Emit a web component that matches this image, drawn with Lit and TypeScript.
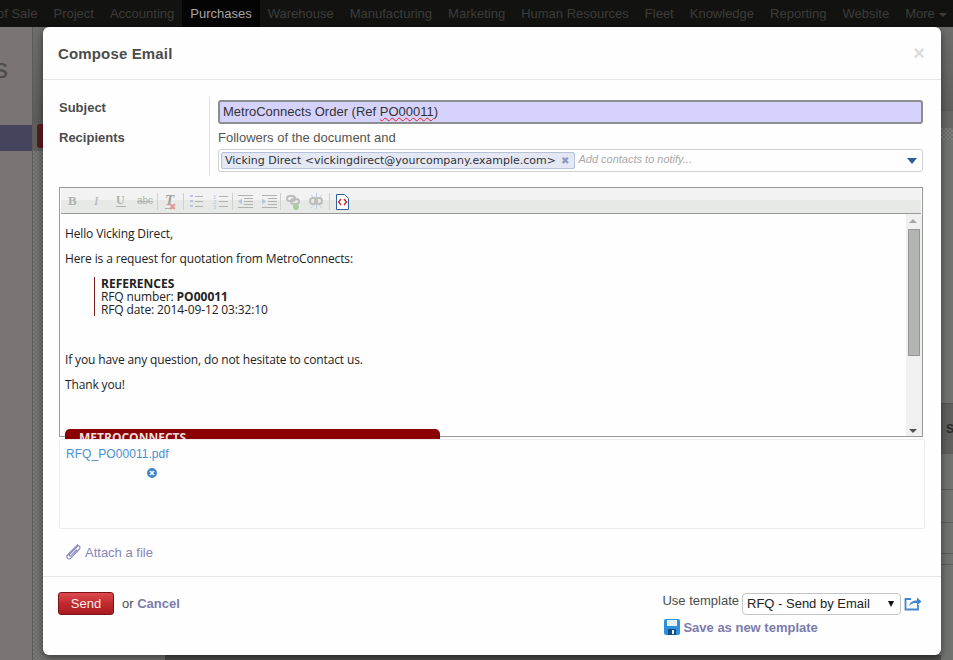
import { LitElement, html, css } from "lit";
import { customElement } from "lit/decorators.js";

const MENU = ["of Sale","Project","Accounting","Purchases","Warehouse","Manufacturing","Marketing","Human Resources","Fleet","Knowledge","Reporting","Website"];

@customElement("app-root")
export class AppRoot extends LitElement {
  static styles = css`
    :host { display:block; position:relative; width:953px; height:660px; overflow:hidden; background:#6f6c6c; font-family:"Liberation Sans",Arial,sans-serif; font-size:13px; color:#4c4c4c; }
    .nav { display:flex; height:27px; background:#121311; color:#3d3c3a; margin-left:-11px; line-height:27px; white-space:nowrap; }
    .nav span { padding:0 8px; }
    .nav .on { background:#040404; color:#a9a6a2; }
    .nav .caret { display:inline-block; border:4px solid transparent; border-top-color:#3d3c3a; border-bottom:0; margin-left:4px; vertical-align:middle; }
    .back { display:flex; height:633px; }
    .side { width:32px; flex:none; background:#7a7574; border-right:1px solid #5b5a59; position:relative; overflow:hidden; }
    .side .s { font-size:28px; color:#4c4a4a; position:absolute; left:-6px; top:27px; line-height:30px; }
    .side .cur { position:absolute; left:0; right:0; top:98px; height:26px; background:#45435e; }
    .lstrip { width:10px; flex:none; display:flex; flex-direction:column; }
    .lstrip .a { height:95px; background:linear-gradient(#6e6f6c,#5c5d5a); }
    .lstrip .b { height:29px; background:#5f5f5d; padding:2px 0 0 4px; box-sizing:border-box; }
    .lstrip .b i { display:block; width:8px; height:24px; background:#5e1a1c; border-radius:3px; }
    .check { background:repeating-conic-gradient(#6c6c6a 0 25%,#7d7d7b 0 50%) 0 0/4px 4px; }
    .lstrip .c { flex:1; }
    .mid { flex:1; display:flex; flex-direction:column; justify-content:flex-end; background:#6d6d6b; }
    .mid .bot { height:5px; display:flex; }
    .mid .bot i { width:122px; background:#777775; }
    .mid .bot b { flex:1; background:#4f4f4d; }
    .rstrip { width:12px; flex:none; display:flex; flex-direction:column; background:#717370; overflow:hidden; }
    .rstrip .a { height:83px; flex:none; background:linear-gradient(#6e6f6c,#5f605d); }
    .rstrip .b { height:18px; flex:none; background:#666765; border-top:1px solid #5a5a58; box-sizing:border-box; }
    .rstrip .c { height:12px; flex:none; }
    .rstrip .d { height:263px; flex:none; }
    .rstrip .e { height:51px; flex:none; background:#5f605d; border-top:1px solid #555; box-sizing:border-box; display:flex; align-items:center; font-size:12px; font-weight:bold; color:#2c2b2a; padding-left:5px; }
    .rstrip .row { flex:none; border-bottom:1px solid #5d5e5c; box-sizing:border-box; }
    .modal { position:absolute; left:43px; top:27px; width:898px; height:628px; background:#fefefe; border-radius:6px; box-shadow:0 3px 9px rgba(0,0,0,.5); display:flex; flex-direction:column; }
    .head { height:53px; box-sizing:border-box; border-bottom:1px solid #e5e5e5; display:flex; align-items:center; justify-content:space-between; padding:0 16px 0 15px; }
    .head h3 { margin:0; font-size:15px; font-weight:bold; color:#4c4c4c; letter-spacing:.15px; }
    .close { font-size:20px; font-weight:bold; color:#dcdcdc; line-height:20px; }
    .body { flex:1; padding:17px 18px 0 16px; display:flex; flex-direction:column; }
    .form { display:flex; height:79px; flex:none; }
    .labels { width:150px; border-right:1px solid #dedede; font-weight:bold; color:#4c4c4c; }
    .labels div { height:30px; line-height:22px; }
    .fields { flex:1; padding:3px 0 0 8px; display:flex; flex-direction:column; }
    .subject { height:24px; box-sizing:border-box; background:#d5d2fd; border:2px solid #8d8d8f; border-radius:3px; padding:0 3px; line-height:20px; color:#333; font-size:13px; }
    .squig { text-decoration:underline wavy #e02020 1px; text-underline-offset:1px; }
    .follow { margin-top:6px; height:19px; line-height:16px; color:#555; }
    .tags { height:23px; box-sizing:border-box; border:1px solid #d0d0d0; border-radius:3px; display:flex; align-items:center; padding-left:2px; position:relative; }
    .tag { height:17px; box-sizing:border-box; background:#e4e8f5; border:1px solid #b6c2d8; border-radius:2px; font-family:"DejaVu Sans",sans-serif; font-size:11px; line-height:15px; padding:0 5px 0 3px; color:#333; white-space:nowrap; display:flex; gap:5px; }
    .tag b { color:#8c9abb; font-size:10px; }
    .ph { font-size:11px; font-style:italic; color:#a8a8a8; margin:-3px 0 0 3px; }
    .drop { position:absolute; right:5px; top:8px; border:5px solid transparent; border-top:6px solid #2a5f9e; border-bottom:0; }
    .editor { margin-top:11px; width:864px; height:250px; flex:none; box-sizing:border-box; border:1px solid #999; display:flex; flex-direction:column; }
    .tools { height:25px; flex:none; background:linear-gradient(#f1f2f1 0 46%,#e7e9e7 46%); border-bottom:1px solid #999; margin:0 1px; }
    .tools svg { display:block; }
    .content { flex:1; display:flex; min-height:0; }
    .text { flex:1; padding:13px 5px 0; font-family:"Open Sans","Noto Sans",sans-serif; font-size:12px; line-height:13px; color:#222; letter-spacing:-.135px; min-width:0; }
    .text p { margin:0 0 12px; line-height:13px; }
    .quote { margin:0 0 0 29px; padding-left:6px; border-left:1px solid #7b1c1c; height:39px; line-height:13px; letter-spacing:-.13px; }
    .quote b { letter-spacing:0; }
    .text .brand { margin-top:38px; width:375px; height:18px; background:#8b0000; border-radius:5px 5px 0 0; color:#f0dede; font-weight:bold; padding-left:14px; box-sizing:border-box; line-height:17px; letter-spacing:0; }
    .scroll { width:16px; background:#eff0ef; position:relative; flex:none; }
    .thumb { position:absolute; left:2px; top:15px; width:10px; height:125px; background:#b3b5b3; border:1px solid #959795; }
    .up,.dn { position:absolute; left:3px; border:4px solid transparent; }
    .up { top:5px; border-top:0; border-bottom:4px solid #a5a5a5; }
    .dn { bottom:3px; border-bottom:0; border-top:4px solid #505050; }
    .att { width:866px; height:90px; flex:none; box-sizing:border-box; margin-top:2px; position:relative; background:#fefefe; border:1px solid #ececf0; border-radius:2px; padding:7px 6px; color:#4a8fd0; font-size:12px; line-height:14px; letter-spacing:.06px; }
    .x { margin:7px 0 0 81px; display:block; }
    .attach { display:flex; align-items:center; gap:4px; margin:12px 0 0 6px; color:#8585ba; height:22px; }
    .foot { height:79px; box-sizing:border-box; border-top:1px solid #e5e5e5; padding:15px 19px 0 15px; display:flex; justify-content:space-between; margin-top:auto; }
    .left { display:flex; align-items:flex-start; gap:8px; }
    .send { width:56px; height:23px; box-sizing:border-box; border:1px solid #7d1318; border-radius:3px; background:linear-gradient(#dc4a4f,#c02a2e 50%,#a81c20); color:#fbeaea; text-align:center; line-height:21px; font-size:13px; }
    .or { line-height:23px; }
    .lnk { color:#7c7bad; font-weight:bold; }
    .right { display:flex; flex-direction:column; }
    .r1 { display:flex; align-items:flex-start; gap:3px; }
    .r1 span { line-height:18px; }
    .pick { width:159px; height:22px; box-sizing:border-box; border:1px solid #c4c4c4; border-radius:4px; padding:0 4px; font-size:13px; color:#222; line-height:20px; display:flex; justify-content:space-between; align-items:center; margin-top:1px; }
    .pick i { border:3.5px solid transparent; border-top:6px solid #111; border-bottom:0; margin-right:2px; }
    .share { margin:3px 0 0 0; }
    .r2 { display:flex; gap:3px; align-items:center; margin:4px 0 0 2px; }
  `;

  render() {
    const g = "#b0b2b0";
    const b = "#b9c4e4";
    return html`
      <div class="nav">
        ${MENU.map(m => html`<span class=${m === "Purchases" ? "on" : ""}>${m}</span>`)}
        <span>More<i class="caret"></i></span>
      </div>
      <div class="back">
        <div class="side"><div class="s">s</div><div class="cur"></div></div>
        <div class="lstrip"><div class="a"></div><div class="b"><i></i></div><div class="c check"></div></div>
        <div class="mid"><div class="bot"><i></i><b></b></div></div>
        <div class="rstrip">
          <div class="a"></div><div class="b"></div><div class="c check"></div><div class="d"></div>
          <div class="e">S</div>
          <div class="row" style="height:36px"></div><div class="row" style="height:33px"></div>
          <div class="row" style="height:31px"></div><div class="row" style="height:11px"></div>
        </div>
      </div>
      <div class="modal">
        <div class="head"><h3>Compose Email</h3><span class="close">×</span></div>
        <div class="body">
          <div class="form">
            <div class="labels"><div>Subject</div><div>Recipients</div></div>
            <div class="fields">
              <div class="subject">MetroConnects Order (Ref <span class="squig">PO00011</span>)</div>
              <div class="follow">Followers of the document and</div>
              <div class="tags">
                <div class="tag">Vicking Direct &lt;vickingdirect@yourcompany.example.com&gt;<b>✖</b></div>
                <span class="ph">Add contacts to notify...</span>
                <i class="drop"></i>
              </div>
            </div>
          </div>
          <div class="editor">
            <div class="tools">
              <svg width="300" height="25" viewBox="61 188 300 25">
                <g font-family="Liberation Serif" fill="${g}" font-size="13">
                  <text x="68" y="205" font-weight="bold">B</text>
                  <text x="94" y="205" font-style="italic">I</text>
                  <text x="116" y="204" font-size="12" font-weight="bold">U</text>
                  <text x="137" y="204" font-size="10" font-family="Liberation Sans">abc</text>
                  <text x="165" y="205" font-style="italic" font-weight="bold" font-size="15" fill="#a0a2a0">T</text>
                </g>
                <path d="M116 206.500h10M137 201.500h16M165 208.500h9" stroke="${g}"/>
                <path d="M170 204l5 5M175 204l-5 5" stroke="#e59a9a" stroke-width="2"/>
                <path d="M157.500 193v17M183.500 193v17M232.500 193v17M280.500 193v17M329.500 193v17" stroke="#cfd0cf"/>
                <path d="M190 196h3M190 201h3M190 206h3" stroke="${b}" stroke-width="2"/>
                <path d="M195 196.500h8M195 201.500h8M195 206.500h8M219 196.500h9M219 201.500h9M219 206.500h9" stroke="${g}"/>
                <g font-family="Liberation Sans" font-size="6" fill="${b}"><text x="213" y="199">1</text><text x="213" y="204">2</text><text x="213" y="209">3</text></g>
                <path d="M238 195.500h15M244 198.500h9M244 201.500h9M244 204.500h9M238 207.500h15M262 195.500h15M268 198.500h9M268 201.500h9M268 204.500h9M262 207.500h15" stroke="${g}"/>
                <path d="M238 201.500l4-3v6zM266 201.500l-4-3v6z" fill="${b}"/>
                <g fill="none" stroke="#bcbebc" stroke-width="2">
                  <rect x="287" y="196" width="8" height="5" rx="2.500"/><rect x="291" y="199" width="8" height="5" rx="2.500"/>
                  <rect x="310" y="198" width="7" height="6" rx="3"/><rect x="315" y="198" width="7" height="6" rx="3"/>
                </g>
                <circle cx="296" cy="207" r="3" fill="#a5cf9a"/>
                <path d="M316.500 193v4M316.500 205v4M311 195l2.500 2.500M322 195l-2.500 2.500M311 208l2.500-2.500M322 208l-2.500-2.500" stroke="#c3cfe6"/>
                <path d="M336.500 194.500h8l4 4v11h-12z" fill="#fff" stroke="#2f5f9e"/>
                <path d="M341 199l-2.500 3 2.500 3" fill="none" stroke="#d02020" stroke-width="1.300"/>
                <path d="M344 199l2.500 3-2.500 3" fill="none" stroke="#d02020" stroke-width="1.300"/>
              </svg>
            </div>
            <div class="content">
              <div class="text">
                <p>Hello Vicking Direct,</p>
                <p>Here is a request for quotation from MetroConnects:</p>
                <div class="quote"><b>REFERENCES</b><br>RFQ number: <b>PO00011</b><br>RFQ date: 2014-09-12 03:32:10</div>
                <p style="margin-top:37px">If you have any question, do not hesitate to contact us.</p>
                <p>Thank you!</p>
                <div class="brand">METROCONNECTS</div>
              </div>
              <div class="scroll"><i class="up"></i><div class="thumb"></div><i class="dn"></i></div>
            </div>
          </div>
          <div class="att">
            RFQ_PO00011.pdf
            <svg class="x" width="10" height="10" viewBox="0 0 10 10"><circle cx="5" cy="5" r="5" fill="#3f87d0"/><path d="M3 3l4 4M7 3l-4 4" stroke="#fff" stroke-width="1.600"/></svg>
          </div>
          <div class="attach">
            <svg width="16" height="18" viewBox="0 0 16 18"><path d="M13 1.500L2.500 12c-2 2 .8 5.500 3 3.300L14.500 6c1.500-2-.6-4-2.300-2.500L4.500 11.300c-1 1.200.4 2.300 1.300 1.500L12 6.500" fill="none" stroke="#8d8dc0" stroke-width="1.200"/></svg>
            Attach a file
          </div>
        </div>
        <div class="foot">
          <div class="left">
            <div class="send">Send</div>
            <span class="or">or <span class="lnk">Cancel</span></span>
          </div>
          <div class="right">
            <div class="r1">
              <span>Use template</span>
              <div class="pick">RFQ - Send by Email<i></i></div>
              <svg class="share" width="18" height="18" viewBox="0 0 18 18"><path d="M7 4H1.500v10.500H14V10" fill="none" stroke="#3f87d0" stroke-width="1.800"/><path d="M5 11c1-4 4-5.500 8-5.500V2.500l4.500 4-4.500 4V8c-3 0-6 .5-8 3z" fill="#3f87d0"/></svg>
            </div>
            <div class="r2">
              <svg width="16" height="16" viewBox="0 0 16 16"><rect width="16" height="16" rx="2" fill="#2f8fdc"/><rect x="3" y="1" width="10" height="6" fill="#e6f2fb"/><rect x="4" y="10" width="8" height="6" fill="#0f4d86"/><rect x="8" y="11" width="2" height="4" fill="#e6f2fb"/></svg>
              <span class="lnk">Save as new template</span>
            </div>
          </div>
        </div>
      </div>
    `;
  }
}
